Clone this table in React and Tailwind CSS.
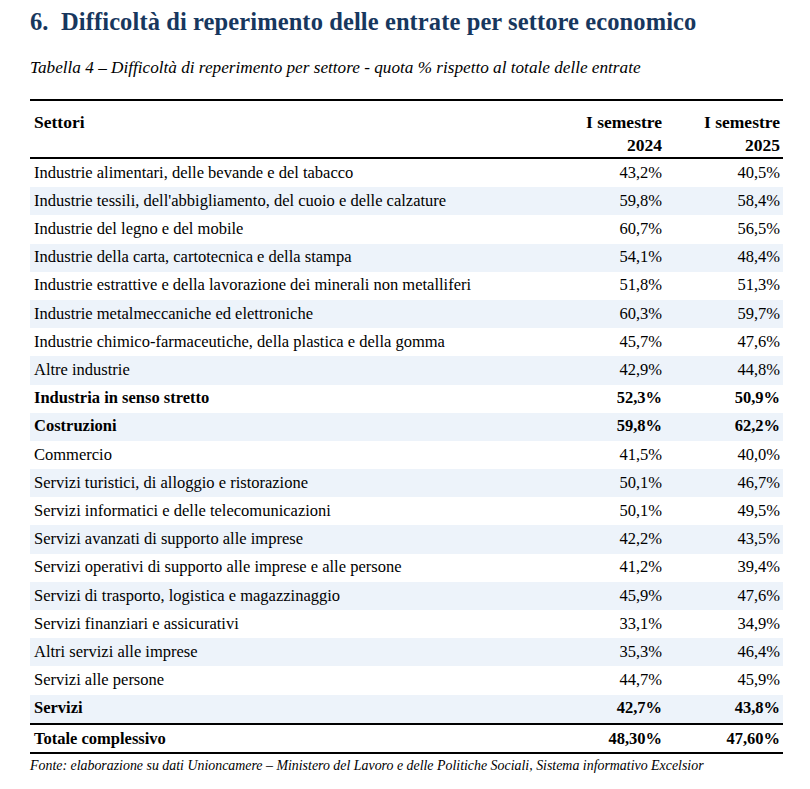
const rows = [
	['Industrie alimentari, delle bevande e del tabacco', '43,2%', '40,5%'],
	["Industrie tessili, dell'abbigliamento, del cuoio e delle calzature", '59,8%', '58,4%'],
	['Industrie del legno e del mobile', '60,7%', '56,5%'],
	['Industrie della carta, cartotecnica e della stampa', '54,1%', '48,4%'],
	['Industrie estrattive e della lavorazione dei minerali non metalliferi', '51,8%', '51,3%'],
	['Industrie metalmeccaniche ed elettroniche', '60,3%', '59,7%'],
	['Industrie chimico-farmaceutiche, della plastica e della gomma', '45,7%', '47,6%'],
	['Altre industrie', '42,9%', '44,8%'],
	['Industria in senso stretto', '52,3%', '50,9%', true],
	['Costruzioni', '59,8%', '62,2%', true],
	['Commercio', '41,5%', '40,0%'],
	['Servizi turistici, di alloggio e ristorazione', '50,1%', '46,7%'],
	['Servizi informatici e delle telecomunicazioni', '50,1%', '49,5%'],
	['Servizi avanzati di supporto alle imprese', '42,2%', '43,5%'],
	['Servizi operativi di supporto alle imprese e alle persone', '41,2%', '39,4%'],
	['Servizi di trasporto, logistica e magazzinaggio', '45,9%', '47,6%'],
	['Servizi finanziari e assicurativi', '33,1%', '34,9%'],
	['Altri servizi alle imprese', '35,3%', '46,4%'],
	['Servizi alle persone', '44,7%', '45,9%'],
	['Servizi', '42,7%', '43,8%', true],
]

const grid = 'grid grid-cols-[533px_104px_116px]'

export default function App() {
	return (
		<div className="w-[810px] h-[789px] bg-white text-black font-['Liberation_Serif',serif]">
			<div className="pl-[30px] pt-[8px]">
				<h1 className="text-[#17375e] text-[24.5px] font-bold leading-[28px] tracking-[0.1px]">
					6.&nbsp;&nbsp;Difficoltà di reperimento delle entrate per settore economico
				</h1>
				<p className="mt-[21px] italic text-[17.2px] leading-[22px]">
					Tabella 4 – Difficoltà di reperimento per settore - quota % rispetto al totale delle entrate
				</p>
				<div className="mt-[20px] w-[753px]">
					<div className={`${grid} border-t-2 border-b-2 border-black font-bold text-[17.5px]`}>
						<div className="pl-[4px] pt-[10px] h-[55px] leading-[23px]">Settori</div>
						<div className="pr-[5px] pt-[10px] text-right leading-[23px]">
							I semestre
							<br />
							2024
						</div>
						<div className="pr-[3px] pt-[10px] text-right leading-[23px]">
							I semestre
							<br />
							2025
						</div>
					</div>
					{rows.map(([label, a, b, bold], i) => (
						<div
							key={label}
							className={`${grid} h-[28.2px] items-center text-[16.5px] ${i % 2 === 1 ? 'bg-[#edf3fa]' : ''} ${bold ? 'font-bold' : ''}`}>
							<div className="pl-[4px] whitespace-nowrap">{label}</div>
							<div className="pr-[5px] text-right">{a}</div>
							<div className="pr-[3px] text-right">{b}</div>
						</div>
					))}
					<div className={`${grid} h-[31px] items-center border-t-2 border-b-2 border-black font-bold text-[16.5px]`}>
						<div className="pl-[4px] pt-[2px]">Totale complessivo</div>
						<div className="pr-[5px] pt-[2px] text-right">48,30%</div>
						<div className="pr-[3px] pt-[2px] text-right">47,60%</div>
					</div>
				</div>
				<p className="mt-[3px] italic text-[13.9px] leading-[18px] whitespace-nowrap">
					Fonte: elaborazione su dati Unioncamere – Ministero del Lavoro e delle Politiche Sociali, Sistema informativo Excelsior
				</p>
			</div>
		</div>
	)
}
